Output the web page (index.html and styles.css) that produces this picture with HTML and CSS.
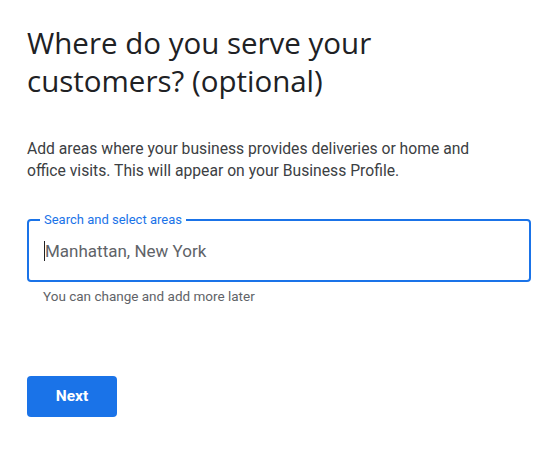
FILE: index.html
```html
<!DOCTYPE html>
<html>
<head>
<meta charset="utf-8">
<link rel="stylesheet" href="styles.css">
</head>
<body>
<main class="page">
  <h1 class="title">Where do you serve your customers? (optional)</h1>
  <p class="desc">Add areas where your business provides deliveries or home and office visits. This will appear on your Business Profile.</p>
  <div class="field">
    <fieldset class="box">
      <legend class="label">Search and select areas</legend>
      <div class="value"><span class="caret"></span>Manhattan, New York</div>
    </fieldset>
    <div class="hint">You can change and add more later</div>
  </div>
  <button class="next">Next</button>
</main>
</body>
</html>
```
FILE: styles.css
```css
html, body { margin: 0; padding: 0; background: #fff; }
.page {
  padding: 24px 17px 0 27px;
  width: 504px;
  font-family: Roboto, "Liberation Sans", sans-serif;
}
.title {
  margin: 0;
  font-family: "Open Sans", Roboto, sans-serif;
  font-weight: 400;
  font-size: 29.5px;
  line-height: 38px;
  color: #202124;
  width: 400px;
}
.desc {
  margin: 38px 0 0 0;
  width: 465px;
  font-size: 15.7px;
  line-height: 22px;
  color: #3c4043;
}
.field { margin-top: 31px; }
.box {
  margin: 0;
  border: 2px solid #1a73e8;
  border-radius: 4px;
  padding: 0 15px;
  box-sizing: border-box;
  height: 69px;
}
.label {
  padding: 0 4px;
  margin-left: -4px;
  font-size: 13px;
  line-height: 13px;
  color: #1a73e8;
}
.value {
  display: flex;
  align-items: center;
  height: 49px;
  font-size: 17px;
  color: #5f6368;
}
.caret {
  display: inline-block;
  width: 1px;
  height: 20px;
  background: #202124;
}
.hint {
  margin: 5px 0 0 16px;
  font-size: 13.5px;
  line-height: 18px;
  color: #5f6368;
}
.next {
  margin-top: 71px;
  width: 90px;
  height: 41px;
  border: none;
  border-radius: 4px;
  background: #1a73e8;
  color: #fff;
  font-family: Roboto, sans-serif;
  font-weight: 700;
  font-size: 15.5px;
  line-height: 39px;
  padding: 0;
}
```
